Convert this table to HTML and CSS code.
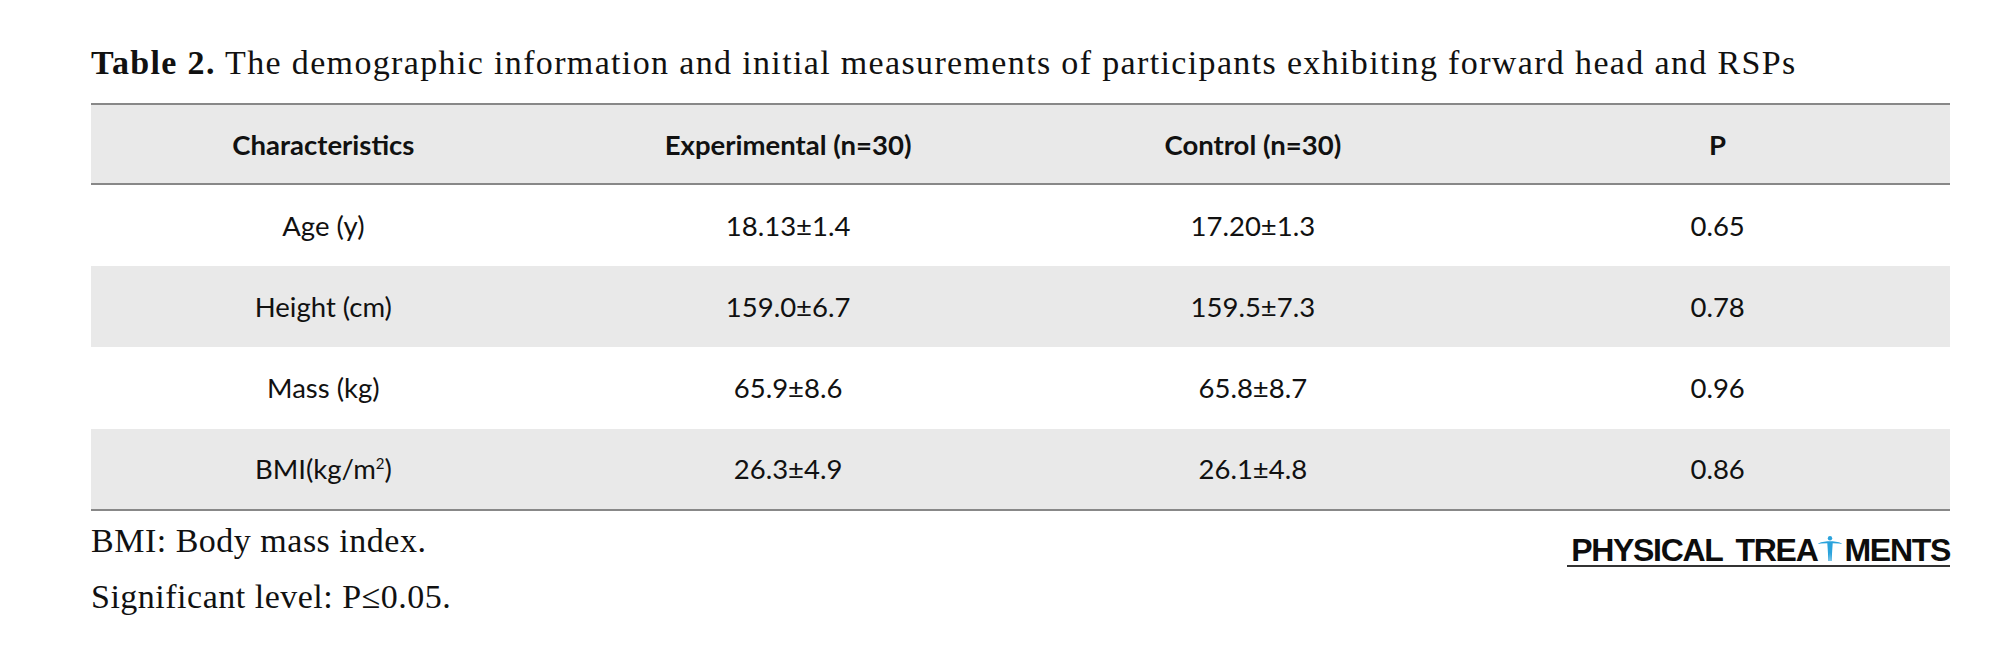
FILE: index.html
```html
<!DOCTYPE html>
<html lang="en">
<head>
<meta charset="utf-8">
<title>Table 2</title>
<link rel="stylesheet" href="styles.css">
</head>
<body>
<div class="page">
  <p class="caption"><b>Table 2.</b> The demographic information and initial measurements of participants exhibiting forward head and RSPs</p>
  <table class="data">
    <thead>
      <tr>
        <th>Characteristics</th>
        <th>Experimental (n=30)</th>
        <th>Control (n=30)</th>
        <th>P</th>
      </tr>
    </thead>
    <tbody>
      <tr>
        <td>Age (y)</td>
        <td>18.13±1.4</td>
        <td>17.20±1.3</td>
        <td>0.65</td>
      </tr>
      <tr class="shade">
        <td>Height (cm)</td>
        <td>159.0±6.7</td>
        <td>159.5±7.3</td>
        <td>0.78</td>
      </tr>
      <tr>
        <td>Mass (kg)</td>
        <td>65.9±8.6</td>
        <td>65.8±8.7</td>
        <td>0.96</td>
      </tr>
      <tr class="shade">
        <td>BMI(kg/m<sup>2</sup>)</td>
        <td>26.3±4.9</td>
        <td>26.1±4.8</td>
        <td>0.86</td>
      </tr>
    </tbody>
  </table>
  <div class="foot">
    <div class="notes">
      <p class="note">BMI: Body mass index.</p>
      <p class="note">Significant level: P≤0.05.</p>
    </div>
    <div class="logo">
      <span>PHYSICAL TREA</span><svg class="figure" viewBox="0 0 24 25" width="24" height="25" aria-hidden="true"><circle cx="12" cy="2.3" r="2.2"/><path d="M0.3 7.4 L3 6.3 L9.4 5.3 L14.6 5.3 L21 6.3 L23.7 7.4 L23.7 8 L21 7.5 L14.7 7.3 L14.2 14.5 L13.6 25 L12.4 25 L12 16.5 L11.6 25 L10.4 25 L9.8 14.5 L9.3 7.3 L3 7.5 L0.3 8 Z"/></svg><span>MENTS</span>
    </div>
  </div>
</div>
</body>
</html>
```

FILE: styles.css
```css
html, body {
  margin: 0;
  padding: 0;
  background: #ffffff;
}

.page {
  width: 1859px;
  margin-left: 91px;
  padding-top: 43px;
  color: #111111;
}

.caption {
  margin: 0;
  font-family: "Liberation Serif", "Times New Roman", serif;
  font-size: 34px;
  line-height: 40px;
  letter-spacing: 1.35px;
  white-space: nowrap;
}

.caption b {
  font-weight: bold;
}

.data {
  margin-top: 20px;
  width: 100%;
  border-collapse: collapse;
  table-layout: fixed;
  font-family: Lato, "Liberation Sans", sans-serif;
  font-size: 27.5px;
  color: #111111;
}

.data th,
.data td {
  width: 25%;
  padding: 0;
  text-align: center;
  vertical-align: middle;
}

.data thead tr {
  height: 80px;
  background: #e9e9e9;
  border-top: 2px solid #888888;
  border-bottom: 2px solid #888888;
}

.data th {
  font-weight: bold;
}

.data tbody tr {
  height: 81.5px;
}

.data tbody tr.shade {
  background: #e9e9e9;
}

.data tbody tr:last-child {
  border-bottom: 2px solid #888888;
}

.data sup {
  font-size: 15px;
  line-height: 0;
  vertical-align: 10px;
}

.foot {
  display: flex;
  justify-content: space-between;
  align-items: flex-start;
}

.notes {
  padding-top: 2px;
}

.note {
  margin: 0;
  font-family: "Liberation Serif", "Times New Roman", serif;
  font-size: 34px;
  line-height: 56px;
  letter-spacing: 0.5px;
}

.logo {
  margin-top: 24px;
  display: flex;
  align-items: flex-end;
  font-family: "Liberation Sans", Arial, sans-serif;
  font-weight: bold;
  font-size: 32px;
  line-height: 30px;
  letter-spacing: -1.3px;
  word-spacing: 6px;
  color: #0d0d0d;
  border-bottom: 2px solid #333333;
  padding-left: 4px;
}

.figure {
  display: block;
  fill: #2ba3dc;
  margin: 0 2px 4px 1px;
}
```
